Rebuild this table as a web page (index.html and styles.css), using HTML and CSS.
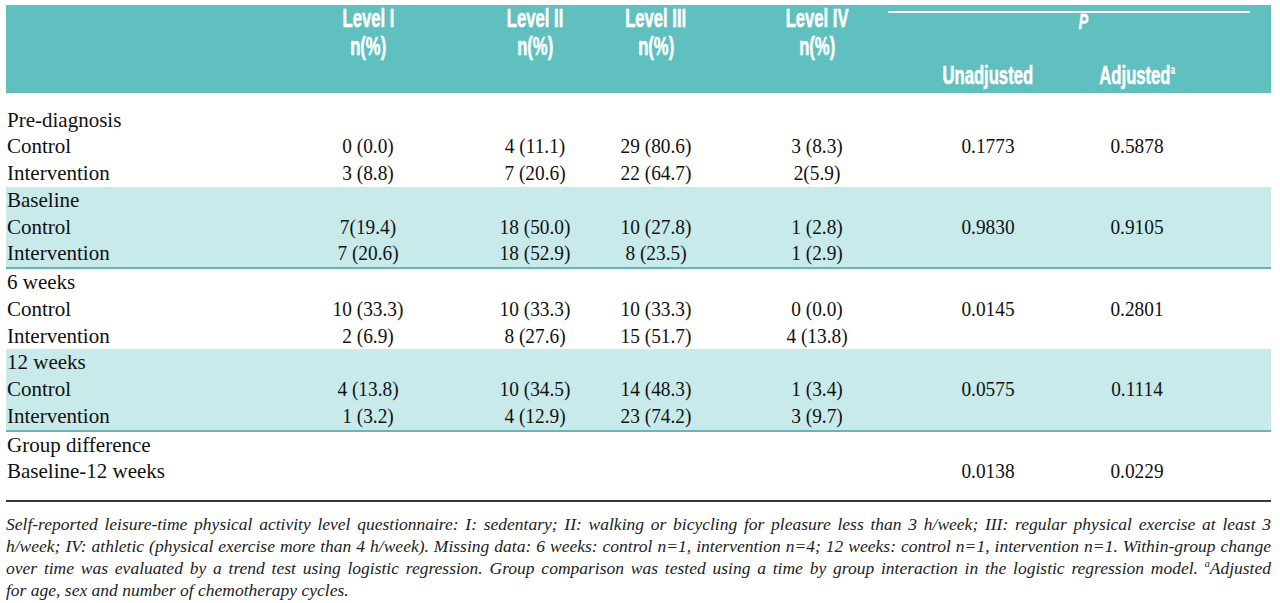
FILE: index.html
```html
<!DOCTYPE html>
<html lang="en">
<head>
<meta charset="utf-8">
<title>Physical activity level table</title>
<link rel="stylesheet" href="styles.css">
</head>
<body>
<div class="table">
  <div class="head">
    <div class="h c1 r1"><span class="sq">Level I</span></div>
    <div class="h c2 r1"><span class="sq">Level II</span></div>
    <div class="h c3 r1"><span class="sq">Level III</span></div>
    <div class="h c4 r1"><span class="sq">Level IV</span></div>
    <div class="pgroup r1"><span class="sq pi">P</span></div>
    <div class="h c1 r2"><span class="sq">n(%)</span></div>
    <div class="h c2 r2"><span class="sq">n(%)</span></div>
    <div class="h c3 r2"><span class="sq">n(%)</span></div>
    <div class="h c4 r2"><span class="sq">n(%)</span></div>
    <div class="h c5 r3"><span class="sq">Unadjusted</span></div>
    <div class="h c6 r3"><span class="sq">Adjusted<sup>a</sup></span></div>
  </div>

  <div class="group first">
    <div class="row"><span class="label">Pre-diagnosis</span></div>
    <div class="row"><span class="label">Control</span><span class="v c1">0 (0.0)</span><span class="v c2">4 (11.1)</span><span class="v c3">29 (80.6)</span><span class="v c4">3 (8.3)</span><span class="v c5">0.1773</span><span class="v c6">0.5878</span></div>
    <div class="row"><span class="label">Intervention</span><span class="v c1">3 (8.8)</span><span class="v c2">7 (20.6)</span><span class="v c3">22 (64.7)</span><span class="v c4">2(5.9)</span></div>
  </div>

  <div class="group band">
    <div class="row"><span class="label">Baseline</span></div>
    <div class="row"><span class="label">Control</span><span class="v c1">7(19.4)</span><span class="v c2">18 (50.0)</span><span class="v c3">10 (27.8)</span><span class="v c4">1 (2.8)</span><span class="v c5">0.9830</span><span class="v c6">0.9105</span></div>
    <div class="row"><span class="label">Intervention</span><span class="v c1">7 (20.6)</span><span class="v c2">18 (52.9)</span><span class="v c3">8 (23.5)</span><span class="v c4">1 (2.9)</span></div>
  </div>

  <div class="group">
    <div class="row"><span class="label">6 weeks</span></div>
    <div class="row"><span class="label">Control</span><span class="v c1">10 (33.3)</span><span class="v c2">10 (33.3)</span><span class="v c3">10 (33.3)</span><span class="v c4">0 (0.0)</span><span class="v c5">0.0145</span><span class="v c6">0.2801</span></div>
    <div class="row"><span class="label">Intervention</span><span class="v c1">2 (6.9)</span><span class="v c2">8 (27.6)</span><span class="v c3">15 (51.7)</span><span class="v c4">4 (13.8)</span></div>
  </div>

  <div class="group band">
    <div class="row"><span class="label">12 weeks</span></div>
    <div class="row"><span class="label">Control</span><span class="v c1">4 (13.8)</span><span class="v c2">10 (34.5)</span><span class="v c3">14 (48.3)</span><span class="v c4">1 (3.4)</span><span class="v c5">0.0575</span><span class="v c6">0.1114</span></div>
    <div class="row"><span class="label">Intervention</span><span class="v c1">1 (3.2)</span><span class="v c2">4 (12.9)</span><span class="v c3">23 (74.2)</span><span class="v c4">3 (9.7)</span></div>
  </div>

  <div class="group">
    <div class="row"><span class="label">Group difference</span></div>
    <div class="row"><span class="label">Baseline-12 weeks</span><span class="v c5">0.0138</span><span class="v c6">0.0229</span></div>
  </div>

  <div class="rule"></div>

  <div class="note">
    <div class="line">Self-reported leisure-time physical activity level questionnaire: I: sedentary; II: walking or bicycling for pleasure less than 3 h/week; III: regular physical exercise at least 3</div>
    <div class="line">h/week; IV: athletic (physical exercise more than 4 h/week). Missing data: 6 weeks: control n=1, intervention n=4; 12 weeks: control n=1, intervention n=1. Within-group change</div>
    <div class="line">over time was evaluated by a trend test using logistic regression. Group comparison was tested using a time by group interaction in the logistic regression model. <sup>a</sup>Adjusted</div>
    <div class="line last">for age, sex and number of chemotherapy cycles.</div>
  </div>
</div>
</body>
</html>
```

FILE: styles.css
```css
html, body {
  margin: 0;
  padding: 0;
  background: #ffffff;
}

.table {
  width: 1265px;
  margin: 5px 0 0 6px;
  color: #111111;
  font-family: "Liberation Serif", "Times New Roman", serif;
}

.head,
.row {
  display: grid;
  grid-template-columns: 302px 120px 47px 120px 1px 120px 41px 120px 51px 120px 29px 120px 1fr;
}

.head {
  height: 88px;
  background: #60bfbf;
  grid-template-rows: 27px 29px 29px;
  color: #ffffff;
  font-family: "Liberation Sans", Arial, sans-serif;
  font-weight: 700;
  font-size: 26px;
}

.h {
  display: flex;
  justify-content: center;
  align-items: center;
  white-space: nowrap;
}

.r1 { grid-row: 1; }
.r2 { grid-row: 2; }
.r3 { grid-row: 3; }

.sq {
  display: inline-block;
  flex: none;
  transform: scaleX(0.64);
  -webkit-text-stroke: 0.6px #ffffff;
}

.h sup {
  font-size: 13px;
  vertical-align: 10px;
  line-height: 0;
  -webkit-text-stroke: 0;
}

.pgroup {
  grid-column: 9 / 14;
  margin: 6px 21px 0 11px;
  border-top: 2px solid #ffffff;
  text-align: center;
  padding-left: 28px;
  line-height: 18px;
  font-size: 22px;
}

.pi {
  font-style: italic;
}

.c1 { grid-column: 2; }
.c2 { grid-column: 4; }
.c3 { grid-column: 6; }
.c4 { grid-column: 8; }
.c5 { grid-column: 10; }
.c6 { grid-column: 12; }

.group.first {
  margin-top: 13.6px;
}

.row {
  height: 26.75px;
  font-size: 21px;
  line-height: 26.75px;
}

.label {
  grid-column: 1;
  padding-left: 1px;
  white-space: nowrap;
}

.v {
  text-align: center;
  white-space: nowrap;
  transform: scaleX(0.92);
}

.band {
  background: #c8eaea;
  border-bottom: 2px solid #62b8b8;
}

.rule {
  margin-top: 15px;
  height: 2px;
  background: #3a3a3a;
}

.note {
  margin-top: 11px;
  font-style: italic;
  font-size: 17.5px;
  line-height: 22px;
  color: #222222;
}

.line {
  text-align: justify;
  text-align-last: justify;
}

.line.last {
  text-align-last: left;
}

.note sup {
  font-size: 10px;
  vertical-align: 7px;
  line-height: 0;
}
```
